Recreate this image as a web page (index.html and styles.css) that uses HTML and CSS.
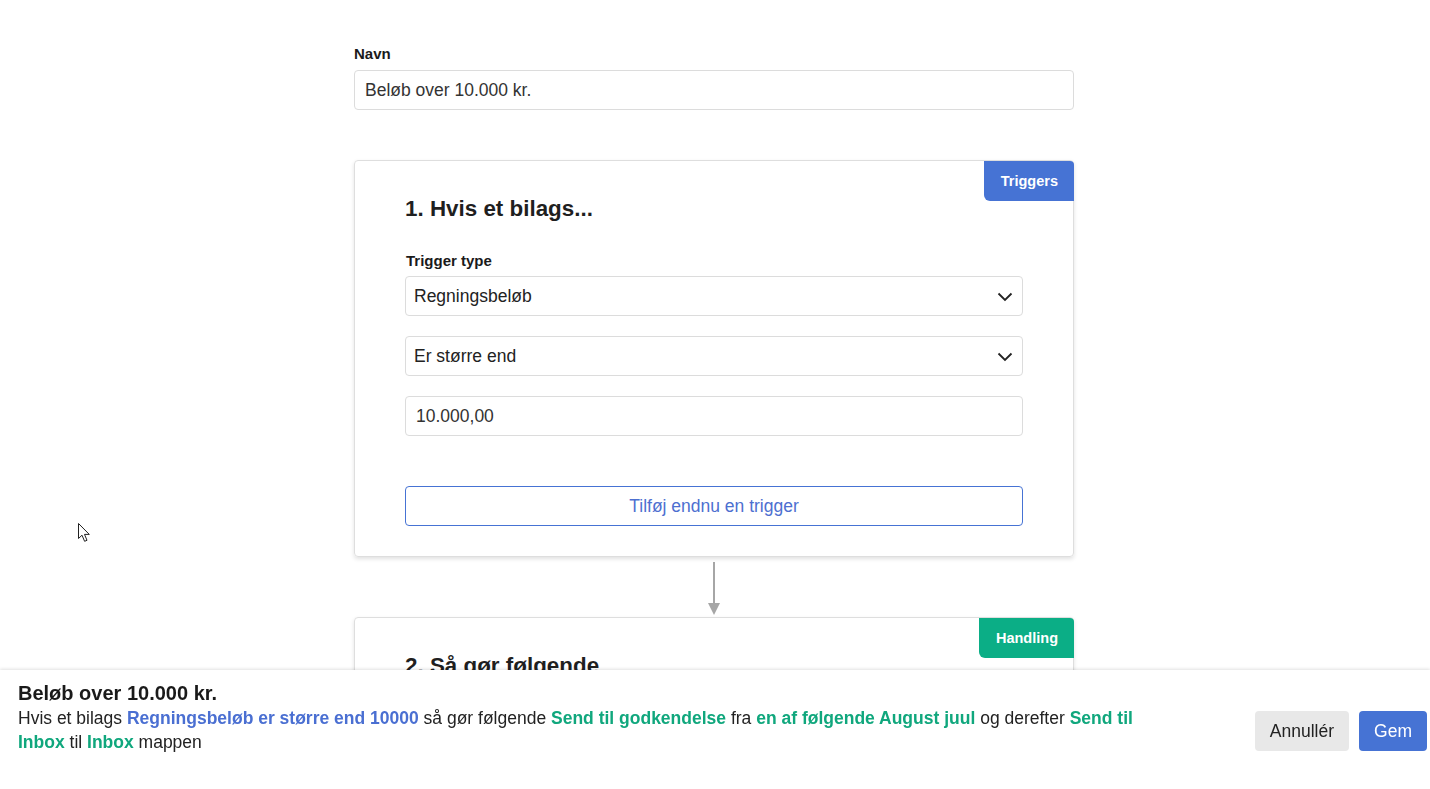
FILE: index.html
```html
<!DOCTYPE html>
<html lang="da">
<head>
    <meta charset="UTF-8">
    <meta name="viewport" content="width=device-width, initial-scale=1.0">
    <title>Regel</title>
    <link rel="stylesheet" href="styles.css">
</head>
<body>

<main class="rule-editor">
    <!-- Navn på reglen -->
    <div class="field">
        <label class="field-label">Navn</label>
        <div class="text-input">Beløb over 10.000 kr.</div>
    </div>

    <!-- 1. Triggers -->
    <section class="step-card">
        <span class="step-badge badge-blue">Triggers</span>
        <h2 class="step-title">1. Hvis et bilags...</h2>

        <label class="field-label">Trigger type</label>
        <div class="select-input">
            <span>Regningsbeløb</span>
            <svg class="chevron" width="16" height="10" viewBox="0 0 16 10"><path d="M1.5 1.5 L8 8 L14.5 1.5" fill="none" stroke="#222" stroke-width="1.8"/></svg>
        </div>
        <div class="select-input">
            <span>Er større end</span>
            <svg class="chevron" width="16" height="10" viewBox="0 0 16 10"><path d="M1.5 1.5 L8 8 L14.5 1.5" fill="none" stroke="#222" stroke-width="1.8"/></svg>
        </div>
        <div class="text-input">10.000,00</div>

        <button class="add-trigger" type="button">Tilføj endnu en trigger</button>
    </section>

    <!-- Pil mellem trinene -->
    <div class="step-arrow">
        <svg width="14" height="60" viewBox="0 0 14 60"><line x1="7" y1="5" x2="7" y2="48" stroke="#a6a6a6" stroke-width="2"/><path d="M1 46 L13 46 L7 58 Z" fill="#a6a6a6"/></svg>
    </div>

    <!-- 2. Handling -->
    <section class="step-card">
        <span class="step-badge badge-green">Handling</span>
        <h2 class="step-title">2. Så gør følgende</h2>
        <div class="spacer"></div>
    </section>
</main>

<!-- Opsummering nederst -->
<footer class="summary-bar">
    <div class="summary-text">
        <div class="summary-title">Beløb over 10.000 kr.</div>
        <p class="summary-desc">Hvis et bilags <b class="hl-blue">Regningsbeløb er større end 10000</b> så gør følgende <b class="hl-green">Send til godkendelse</b> fra <b class="hl-green">en af følgende August juul</b> og derefter <b class="hl-green">Send til Inbox</b> til <b class="hl-green">Inbox</b> mappen</p>
    </div>
    <div class="summary-actions">
        <button class="btn btn-grey" type="button">Annullér</button>
        <button class="btn btn-blue" type="button">Gem</button>
    </div>
</footer>

<svg class="cursor" width="13" height="20" viewBox="0 0 13 20"><path d="M0.5 0.5 L0.5 15.5 L4 12.2 L6.6 18.3 L9 17.3 L6.5 11.4 L11.3 11.4 Z" fill="#fff" stroke="#222" stroke-width="1"/></svg>

</body>
</html>
```

FILE: styles.css
```css
* {
    box-sizing: border-box;
}

body {
    margin: 0;
    background: #fff;
    font-family: "Liberation Sans", Arial, sans-serif;
    color: #222;
}

/* Hovedkolonne */
.rule-editor {
    width: 720px;
    margin: 0 auto;
    padding: 46px 0 200px;
    position: relative;
    left: -1px;
}

.field {
    margin-bottom: 50px;
}

.field-label {
    display: block;
    font-size: 15px;
    line-height: 16px;
    font-weight: bold;
    color: #1a1a1a;
    margin-bottom: 8px;
}

.text-input,
.select-input {
    height: 40px;
    border: 1px solid #dcdcdc;
    border-radius: 4px;
    padding: 0 10px;
    font-size: 17.5px;
    color: #333;
    display: flex;
    align-items: center;
    background: #fff;
}

.select-input {
    justify-content: space-between;
    padding: 0 9px 0 8px;
    color: #222;
}

.chevron {
    margin-top: 1px;
}

/* Trin-kort */
.step-card {
    position: relative;
    border: 1px solid #dedede;
    border-radius: 4px;
    box-shadow: 0 2px 4px rgba(0, 0, 0, 0.12);
    padding: 35px 50px 30px;
}

.step-card .select-input,
.step-card .text-input {
    margin-top: 20px;
}

.step-card .field-label + .select-input {
    margin-top: 0;
}

.step-card .field-label {
    margin-bottom: 7px;
    padding-left: 1px;
}

.step-badge {
    position: absolute;
    top: 0;
    right: -1px;
    height: 40px;
    line-height: 40px;
    padding: 0 16px 0 17px;
    color: #fff;
    font-size: 14.5px;
    font-weight: bold;
    border-radius: 0 4px 0 6px;
}

.badge-blue {
    background: #4673d4;
}

.badge-green {
    background: #0bae86;
}

.step-title {
    margin: 0 0 31px;
    font-size: 22.4px;
    line-height: 26px;
    font-weight: bold;
    color: #1f1f1f;
}

.add-trigger {
    display: block;
    width: 100%;
    height: 40px;
    margin-top: 50px;
    background: #fff;
    border: 1px solid #4673d4;
    border-radius: 4px;
    color: #4d6fd0;
    font-family: inherit;
    font-size: 17.5px;
}

.step-arrow {
    display: flex;
    justify-content: center;
    height: 60px;
}

.spacer {
    height: 200px;
}

/* Bundlinje med opsummering */
.summary-bar {
    position: fixed;
    left: 0;
    right: 0;
    bottom: 0;
    height: 119px;
    background: #fff;
    box-shadow: 0 -1px 3px rgba(0, 0, 0, 0.12);
    display: flex;
    justify-content: space-between;
    padding: 12px 3px 0 18px;
}

.summary-text {
    width: 1122px;
}

.summary-title {
    font-size: 20px;
    line-height: 22px;
    font-weight: bold;
    color: #1a1a1a;
    margin-bottom: 2px;
}

.summary-desc {
    margin: 0;
    font-size: 17.5px;
    line-height: 24px;
    color: #222;
}

.hl-blue {
    color: #4a6fd2;
}

.hl-green {
    color: #10a77d;
}

.summary-actions {
    display: flex;
    gap: 10px;
    margin-top: 29px;
    align-self: flex-start;
}

.btn {
    height: 40px;
    border: none;
    border-radius: 4px;
    padding: 0 15px;
    font-family: inherit;
    font-size: 17.5px;
}

.btn-grey {
    background: #e8e8e8;
    color: #222;
}

.btn-blue {
    background: #4673d4;
    color: #fff;
}

.cursor {
    position: absolute;
    left: 78px;
    top: 523px;
}
```
